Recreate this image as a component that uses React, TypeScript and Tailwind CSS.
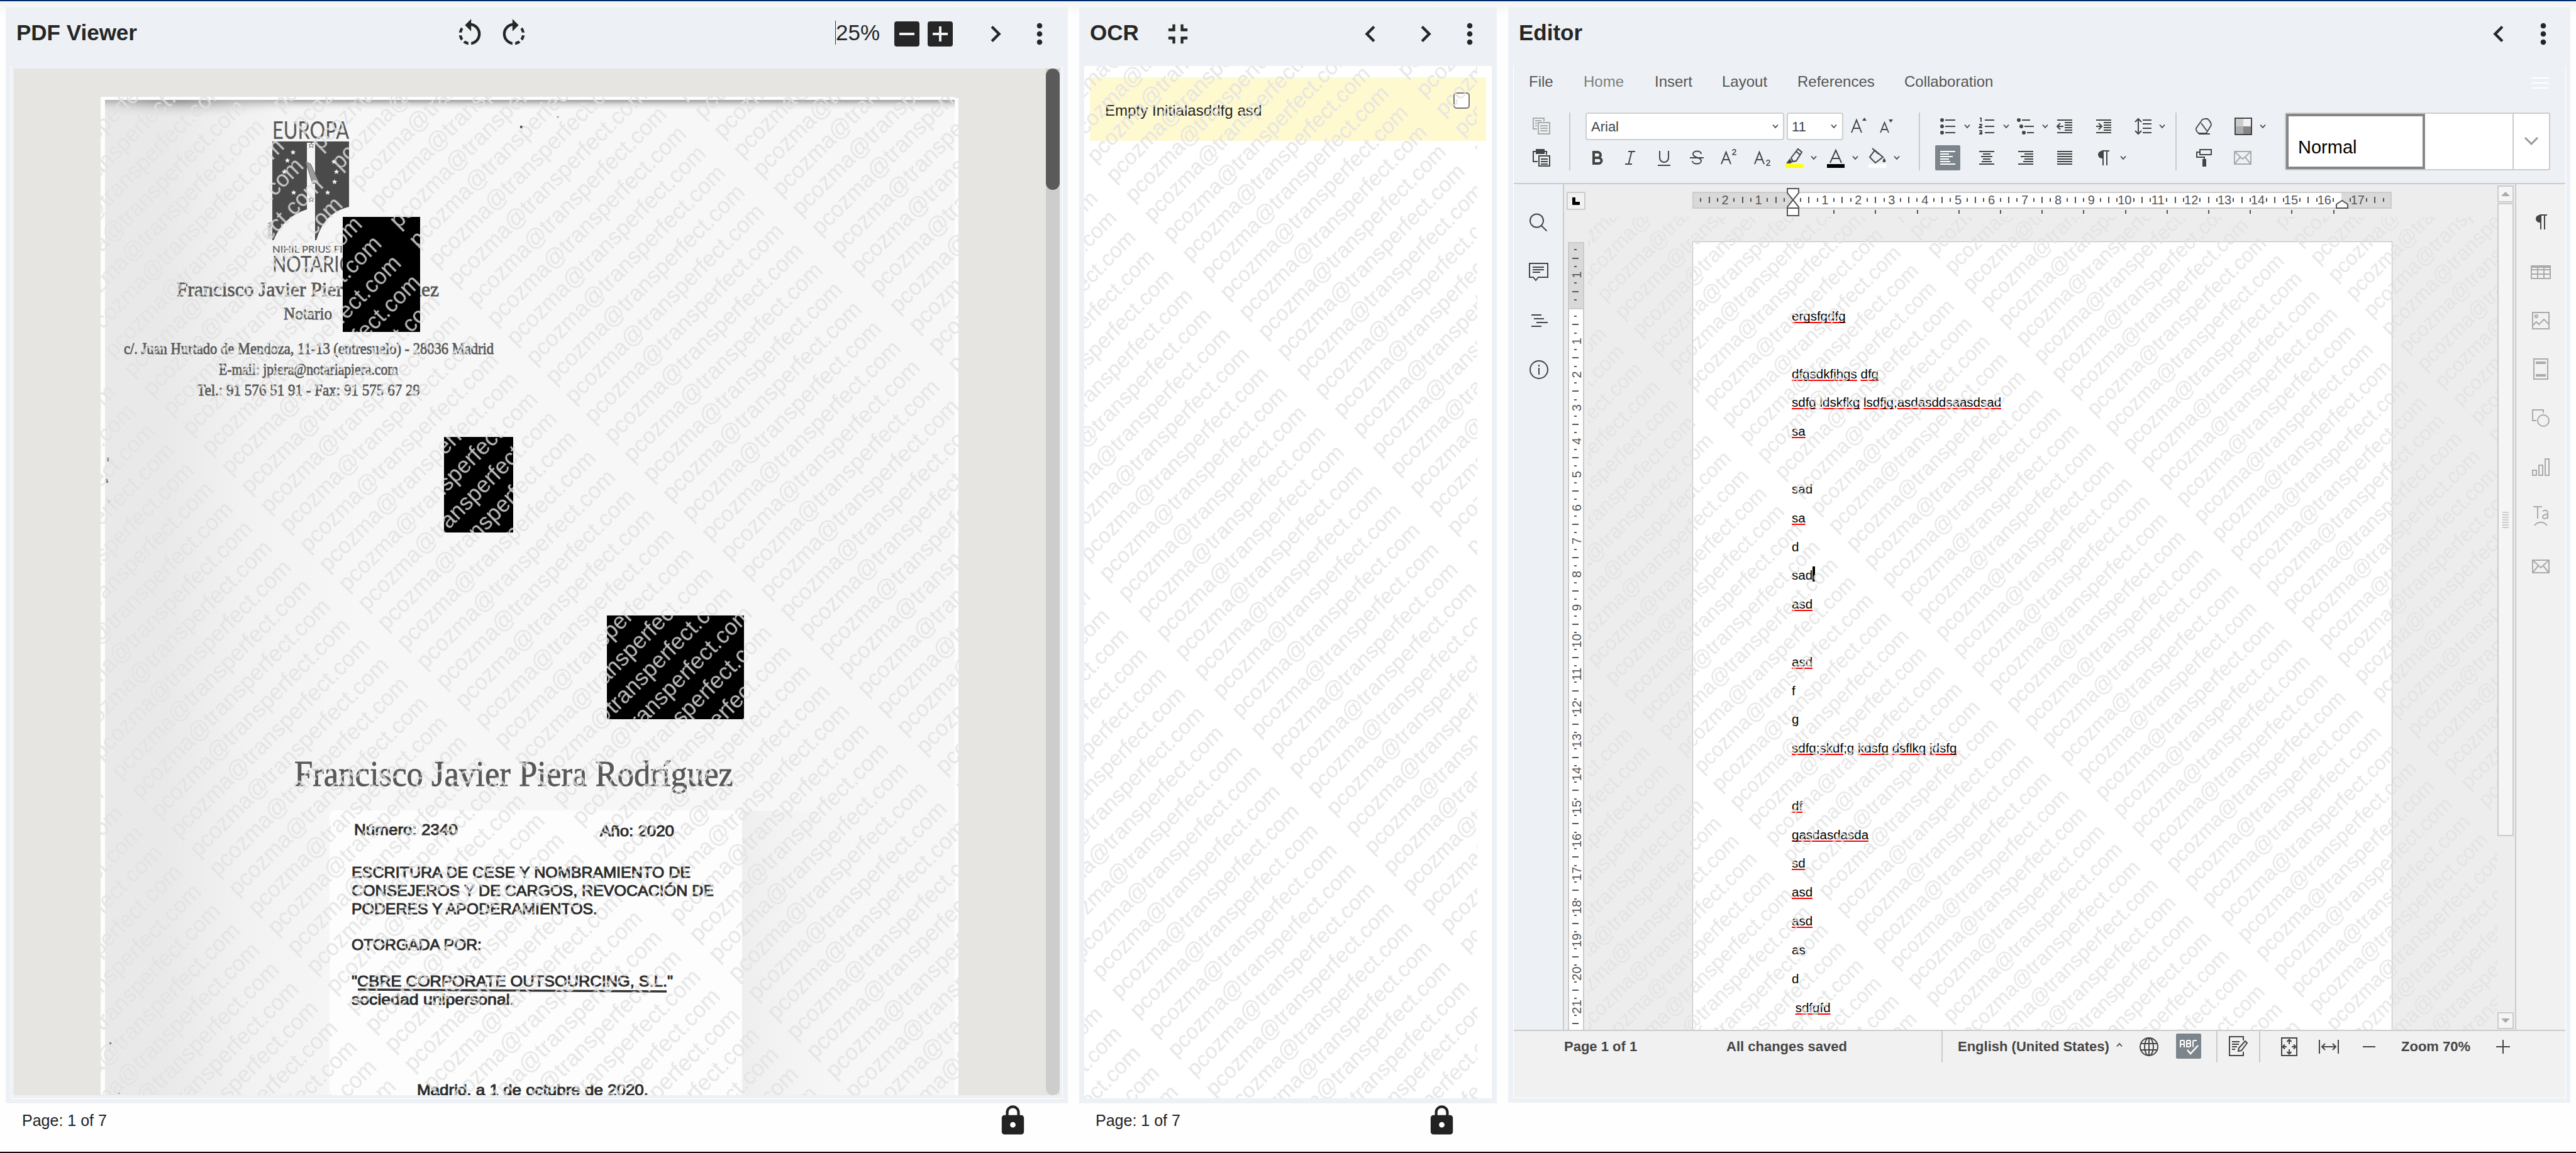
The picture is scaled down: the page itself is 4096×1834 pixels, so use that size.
import React from "react";
import {
  MdRotateLeft,
  MdRotateRight,
  MdChevronRight,
  MdChevronLeft,
  MdMoreVert,
  MdFullscreenExit,
  MdLock,
} from "react-icons/md";

const MARK = "pcozma@transperfect.com";

type MarkProps = {
  id: string;
  x: number;
  y: number;
  size: number;
  col: number;
  row: number;
  sy?: number;
};

/* Repeating diagonal e-mail watermark; (x, y) is the baseline start of one repeat. */
function Watermark({ id, x, y, size, col, row, sy = 1 }: MarkProps) {
  const base = row * 0.74;
  return (
    <svg className="pointer-events-none absolute inset-0 h-full w-full">
      <defs>
        <pattern
          id={id}
          x="0"
          y="0"
          width={col}
          height={row}
          patternUnits="userSpaceOnUse"
          patternTransform={`translate(${x} ${y}) scale(1 ${sy}) rotate(-45) translate(0 ${-base})`}
        >
          <text x="0" y={base} fontSize={size} fill="#e1e1e1" fillOpacity="0.84" fontFamily="Liberation Sans, Arial, sans-serif">
            {MARK}
          </text>
        </pattern>
      </defs>
      <rect width="100%" height="100%" fill={`url(#${id})`} />
    </svg>
  );
}

/* ------------------------------------------------------------------ PDF */

const STARS = [
  [466, 242], [457, 255], [452, 273], [467, 306], [531, 257],
  [535, 273], [532, 289], [521, 306],
];

type ScanLine = { t: string; x: number; y: number; w: number; s: number; f?: "serif" | "lato" };

const SCAN_TOP: ScanLine[] = [
  { t: "EUROPA", x: 433, y: 221, w: 122, s: 39, f: "lato" },
  { t: "NIHIL PRIUS FIDE", x: 433, y: 402, w: 134, s: 15, f: "lato" },
  { t: "NOTARIO", x: 433, y: 433, w: 130, s: 36, f: "lato" },
  { t: "Francisco Javier Piera Rodríguez", x: 281, y: 471, w: 417, s: 32 },
  { t: "Notario", x: 451, y: 508, w: 77, s: 27 },
  { t: "c/. Juan Hurtado de Mendoza, 11-13 (entresuelo) - 28036 Madrid", x: 197, y: 563, w: 588, s: 25 },
  { t: "E-mail: jpiera@notariapiera.com", x: 348, y: 596, w: 285, s: 25 },
  { t: "Tel.: 91 576 51 91 - Fax: 91 575 67 29", x: 313, y: 629, w: 355, s: 25 },
  { t: "Francisco Javier Piera Rodríguez", x: 468, y: 1250, w: 698, s: 58 },
];

const SCAN_CARD: ScanLine[] = [
  { t: "Número: 2340", x: 563, y: 1328, w: 165, s: 24 },
  { t: "Año: 2020", x: 954, y: 1330, w: 118, s: 24 },
  { t: "ESCRITURA DE CESE Y NOMBRAMIENTO DE", x: 559, y: 1396, w: 539, s: 24 },
  { t: "CONSEJEROS Y DE CARGOS, REVOCACIÓN DE", x: 559, y: 1425, w: 576, s: 24 },
  { t: "PODERES Y APODERAMIENTOS.", x: 559, y: 1454, w: 391, s: 24 },
  { t: "OTORGADA POR:", x: 559, y: 1511, w: 207, s: 24 },
  { t: "\"CBRE CORPORATE OUTSOURCING, S.L.\"", x: 559, y: 1569, w: 511, s: 24 },
  { t: "sociedad unipersonal.", x: 559, y: 1598, w: 259, s: 24 },
  { t: "Madrid, a 1 de octubre de 2020.", x: 663, y: 1742, w: 368, s: 24 },
];

function ScannedPage() {
  return (
    <svg className="absolute inset-0 h-full w-full" viewBox="160 154 1364 1588">
      <defs>
        <linearGradient id="pgLeft" x1="0" x2="1" y1="0" y2="0">
          <stop offset="0" stopColor="#e9e9e9" />
          <stop offset="0.07" stopColor="#e9e9e9" />
          <stop offset="0.17" stopColor="#f2f2f2" />
          <stop offset="0.3" stopColor="#f7f7f7" />
          <stop offset="1" stopColor="#f7f7f7" />
        </linearGradient>
        <linearGradient id="pgTop" x1="0" x2="0" y1="0" y2="1">
          <stop offset="0" stopColor="#9c9c9c" />
          <stop offset="0.35" stopColor="#cfcfcf" />
          <stop offset="1" stopColor="#f0f0f0" stopOpacity="0" />
        </linearGradient>
        <radialGradient id="pgCorner" cx="0.38" cy="0" r="0.75">
          <stop offset="0" stopColor="#8a8a8a" stopOpacity="0.8" />
          <stop offset="0.4" stopColor="#bdbdbd" stopOpacity="0.6" />
          <stop offset="1" stopColor="#e8e8e8" stopOpacity="0" />
        </radialGradient>
        <linearGradient id="pgSide" x1="0" x2="1" y1="0" y2="0">
          <stop offset="0" stopColor="#eeeeee" />
          <stop offset="1" stopColor="#f7f7f7" stopOpacity="0" />
        </linearGradient>
      </defs>
      <rect x="160" y="154" width="1364" height="1588" fill="#fdfdfd" />
      <rect x="167" y="159" width="1351" height="1583" fill="url(#pgLeft)" />
      <rect x="167" y="159" width="1351" height="16" fill="url(#pgTop)" />
      <rect x="167" y="159" width="300" height="40" fill="url(#pgCorner)" />
      <rect x="1180" y="1290" width="220" height="452" fill="url(#pgSide)" />
      <circle cx="829" cy="202" r="2.2" fill="#444" />
      <circle cx="887" cy="186" r="1.5" fill="#999" />
      <path d="M172 728v6M169 762l2 6M173 796v4M175 1658l1 3M189 1738v2" stroke="#777" strokeWidth="3" />
      {SCAN_TOP.map((l, i) => (
        <text
          key={i}
          x={l.x}
          y={l.y}
          fontSize={l.s}
          textLength={l.w}
          lengthAdjust="spacingAndGlyphs"
          fill="#585858"
          fontFamily={l.f === "lato" ? "Lato, sans-serif" : "Liberation Serif, serif"}
          stroke="#585858"
          strokeWidth={l.f === "lato" ? 0.2 : 0.8}
        >
          {l.t}
        </text>
      ))}
      <path d="M433 226H488V333Q450 345 435 382H433Z" fill="#4a4a4a" />
      <path d="M501 226H555V329Q515 338 503 382H501Z" fill="#4a4a4a" />
      <path d="M486 257l8 4 13 29-10 2z" fill="#9b9b9b" stroke="#666" strokeWidth="1" />
      <path d="M433 226H555" stroke="#4a4a4a" strokeWidth="2" />
      {STARS.map(([x, y], i) => (
        <path key={i} d={`M${x} ${y - 4}l1.2 2.8 3 .2-2.3 1.9.8 3-2.7-1.6-2.7 1.6.8-3-2.3-1.900 3-.2z`} fill="#f4f4f4" />
      ))}
      <path d="M495 227l1 3 3 0-2 2 1 3-3-2-3 2 1-3-2-2 3 0zM495 313l1 3 3 0-2 2 1 3-3-2-3 2 1-3-2-2 3 0z" fill="none" stroke="#777" strokeWidth="1" />
      <text transform="translate(432 380) rotate(-90)" fontSize="7" textLength="27" fill="#777" fontFamily="Lato, sans-serif">
        ESPAÑA
      </text>
      <rect x="524" y="1289" width="656" height="453" rx="6" fill="#fdfdfd" />
      {SCAN_CARD.map((l, i) => (
        <text
          key={i}
          x={l.x}
          y={l.y}
          fontSize={l.s}
          textLength={l.w}
          lengthAdjust="spacingAndGlyphs"
          fill="#2c2c2c"
          stroke="#2c2c2c"
          strokeWidth="1"
          fontFamily="Liberation Sans, Arial, sans-serif"
        >
          {l.t}
        </text>
      ))}
      <path d="M569 1574L1060 1577" stroke="#333" strokeWidth="3.5" />
      <rect x="545" y="345" width="123" height="183" fill="#000" />
      <rect x="706" y="695" width="110" height="152" fill="#000" />
      <rect x="965" y="979" width="218" height="165" fill="#000" />
    </svg>
  );
}

function Footer({ lock }: { lock: string }) {
  return (
    <div className="flex h-[77px] items-start text-[25px] text-[#222]">
      <span className="ml-[26px] mt-[12px] leading-[30px]">Page: 1 of 7</span>
      <MdLock className={lock} />
    </div>
  );
}

function PdfPanel() {
  return (
    <section className="w-[1689px]">
      <div className="h-[1744px] bg-[#edf1f5]">
        <header className="flex h-[94px] items-start text-[#262626]">
          <h1 className="ml-[17px] mt-[21px] w-[695px] text-[35px] leading-[40px] font-bold">PDF Viewer</h1>
          <MdRotateLeft className="mt-[17px] h-[52px] w-[52px]" />
          <MdRotateRight className="mt-[17px] ml-[18px] h-[52px] w-[52px]" />
          <div className="mt-[21px] ml-[485px] flex w-[94px] items-center text-[35px] leading-[40px]">
            <span className="h-[38px] w-px bg-[#333]" />
            <span>25%</span>
          </div>
          <button className="mt-[23px] flex h-[40px] w-[40px] items-center justify-center rounded-[4px] bg-[#262626]">
            <span className="h-[4px] w-[24px] bg-[#edf1f5]" />
          </button>
          <button className="relative mt-[23px] ml-[13px] flex h-[40px] w-[40px] items-center justify-center rounded-[4px] bg-[#262626]">
            <span className="h-[4px] w-[24px] bg-[#edf1f5]" />
            <span className="absolute h-[24px] w-[4px] bg-[#edf1f5]" />
          </button>
          <MdChevronRight className="mt-[17px] ml-[42px] h-[52px] w-[52px]" />
          <MdMoreVert className="mt-[17px] ml-[18px] h-[52px] w-[52px]" />
        </header>
        <div className="ml-[8px] h-[1643px] w-[1673px] border border-t-0 border-white px-[4px] pt-[4px]">
          <div className="flex h-[1633px] w-[1663px] bg-[#e6e5e1]">
            <div className="relative mt-[45px] ml-[138px] h-[1588px] w-[1364px] overflow-hidden">
              <ScannedPage />
              <Watermark id="wmPdf" x={175} y={571} size={36} col={466} row={43.84} />
            </div>
            <div className="ml-auto h-full w-[22px] rounded-b-full bg-[#cdcdcd]">
              <div className="h-[193px] w-[22px] rounded-full bg-[#5a5a5a]" />
            </div>
          </div>
        </div>
      </div>
      <Footer lock="mt-px ml-auto mr-[61px] h-[53px] w-[53px]" />
    </section>
  );
}

function OcrPanel() {
  return (
    <section className="ml-[18px] w-[664px]">
      <div className="h-[1744px] bg-[#edf1f5]">
        <header className="flex h-[94px] items-start text-[#262626]">
          <h1 className="ml-[17px] mt-[21px] w-[114px] text-[35px] leading-[40px] font-bold">OCR</h1>
          <MdFullscreenExit className="mt-[17px] h-[52px] w-[52px]" />
          <MdChevronLeft className="mt-[17px] ml-[254px] h-[52px] w-[52px]" />
          <MdChevronRight className="mt-[17px] ml-[36px] h-[52px] w-[52px]" />
          <MdMoreVert className="mt-[17px] ml-[18px] h-[52px] w-[52px]" />
        </header>
        <div className="relative ml-[8px] h-[1642px] w-[648px] bg-white pt-[18px] pl-[9px]">
          <div className="flex h-[101px] w-[630px] bg-[#fff9d0] text-[24px] text-[#222]">
            <span className="mt-[38px] ml-[24px] leading-[30px] tracking-[0.05px]">Empty Initialasddfg asd</span>
            <span className="mt-[24px] mr-[26px] ml-auto h-[26px] w-[26px] rounded-[5px] border-2 border-[#767676] bg-white" />
          </div>
          <div className="absolute top-0 left-0 h-[1642px] w-[625px] overflow-hidden">
            <Watermark id="wmOcr" x={18} y={155.5} size={34} col={442} row={42.6} sy={1.032} />
          </div>
        </div>
      </div>
      <Footer lock="mt-px ml-auto mr-[61px] h-[53px] w-[53px]" />
    </section>
  );
}

/* --------------------------------------------------------------- Editor */

function Ico({ className = "", children }: { className?: string; children: React.ReactNode }) {
  return (
    <svg viewBox="0 0 28 28" className={`h-[28px] w-[28px] shrink-0 ${className}`} fill="none" stroke="currentColor" strokeWidth="2">
      {children}
    </svg>
  );
}

function Caret({ className = "" }: { className?: string }) {
  return (
    <svg viewBox="0 0 10 8" className={`h-[8px] w-[10px] shrink-0 ${className}`} fill="none" stroke="#444" strokeWidth="1.8">
      <path d="M1 1.5L5 6 9 1.5" />
    </svg>
  );
}

function Envelope({ className = "" }: { className?: string }) {
  return (
    <Ico className={className}>
      <path d="M1 4h26v20H1zM1 4l13 12L27 4M1 24l9-11M27 24l-9-11" />
    </Ico>
  );
}

function Pilcrow({ className = "" }: { className?: string }) {
  return (
    <Ico className={className}>
      <path d="M23 3H12a6 6 0 0 0 0 12h2V3z" fill="currentColor" stroke="none" />
      <path d="M14 3v23M20 3v23M12 3h12" />
    </Ico>
  );
}

const MENU: [string, string][] = [
  ["File", "w-[87px]"],
  ["Home", "w-[113px]"],
  ["Insert", "w-[107px]"],
  ["Layout", "w-[120px]"],
  ["References", "w-[170px]"],
  ["Collaboration", "w-[180px]"],
];

function Ribbon() {
  return (
    <div className="h-[188px] text-[#444]">
      <nav className="relative flex h-[57px] items-start pt-[10px] pl-[24px] text-[24px] leading-[30px] text-[#555]">
        {MENU.map(([m, w]) => (
          <span key={m} className={`${w} ${m === "Home" ? "text-[#7d7d7d]" : ""}`}>
            {m}
          </span>
        ))}
        <span className="mt-[8px] mr-[26px] ml-auto flex h-[18px] w-[28px] flex-col justify-between">
          <i className="h-[2px] bg-white" />
          <i className="h-[2px] bg-white" />
          <i className="h-[2px] bg-white" />
        </span>
      </nav>
      <div className="mt-[17px] flex h-[92px]">
        <div className="ml-[30px] flex w-[28px] flex-col">
          <Ico className="mt-[7px] text-[#aaa]">
            <path d="M7 19H1V2h17v5M9 9h18v18H9zM12 14h12M12 18h12M12 22h12M4 6h10M4 10h3M4 14h3" />
          </Ico>
          <Ico className="mt-[23px]">
            <path d="M8 20H1V4h6M19 4h3v5M10 11h17v16H10zM13 16h11M13 20h11M13 24h11" />
            <path d="M6 1h12v6H6z" fill="currentColor" />
          </Ico>
        </div>
        <div className="ml-[30px] w-[2px] bg-[#cbcbcb]" />
        <div className="ml-[24px] w-[530px]">
          <div className="flex h-[44px] items-center">
            <div className="flex h-[44px] w-[316px] items-center justify-between rounded-[4px] border-2 border-[#cfcfcf] bg-white pr-[7px] pl-[7px] text-[22px]">
              Arial
              <Caret />
            </div>
            <div className="ml-[4px] flex h-[44px] w-[90px] items-center justify-between rounded-[4px] border-2 border-[#cfcfcf] bg-white pr-[8px] pl-[6px] text-[22px]">
              11
              <Caret />
            </div>
            <Ico className="ml-[10px]">
              <path d="M3 24L11 4l8 20M6 17h10" />
              <path d="M20 5l3.500-5 3.500 5z" fill="currentColor" stroke="none" />
            </Ico>
            <Ico className="ml-[18px]">
              <path d="M3 24L9.500 8l6.500 16M5.500 19h8" strokeWidth="1.800" />
              <path d="M16 3l3.500 5 3.500-5z" fill="currentColor" stroke="none" />
            </Ico>
          </div>
          <div className="mt-[8px] flex h-[40px] items-center">
            <Ico className="ml-[5px]">
              <path d="M8 5h6.500a4.500 4.500 0 0 1 0 9H8zM8 14h8a4.500 4.500 0 0 1 0 9H8z" strokeWidth="4" />
            </Ico>
            <Ico className="ml-[24px]">
              <path d="M11 4h11M6 24h11M16.500 4L11.500 24" />
            </Ico>
            <Ico className="ml-[26px]">
              <path d="M7 3v11a7 7 0 0 0 14 0V3M4 26h20" />
            </Ico>
            <Ico className="ml-[24px]">
              <path d="M21 8c0-6-13-6-13 0 0 7 13 4 13 11 0 6-14 6-14 0M3 14h22" />
            </Ico>
            <Ico className="ml-[23px]">
              <path d="M2 24L9.500 5 17 24M5 17h9" />
              <path d="M20 3c0-3 5-3 5 0 0 2-5 4-5 6h6" strokeWidth="1.600" />
            </Ico>
            <Ico className="ml-[25px]">
              <path d="M2 24L9.500 5 17 24M5 17h9" />
              <path d="M21 20c0-3 5-3 5 0 0 2-5 4-5 6h6" strokeWidth="1.600" />
            </Ico>
            <div className="ml-[23px] flex w-[28px] flex-col">
              <svg viewBox="0 0 28 26" className="h-[26px] w-[28px]" fill="none" stroke="currentColor" strokeWidth="2">
                <path d="M9 16L20 2l6 5-9 14-5 1zM17 6l6 5" />
                <path d="M1 25l6-8 4 6-3 2z" fill="currentColor" stroke="none" />
              </svg>
              <div className="h-[6px] w-[28px] bg-[#ffff00]" />
            </div>
            <Caret className="ml-[12px]" />
            <div className="ml-[16px] flex w-[28px] flex-col">
              <svg viewBox="0 0 28 26" className="h-[26px] w-[28px]" fill="none" stroke="currentColor" strokeWidth="2">
                <path d="M5 24L14 4l9 20M8 17h12" />
              </svg>
              <div className="h-[6px] w-[28px] bg-black" />
            </div>
            <Caret className="ml-[12px]" />
            <div className="ml-[16px] flex w-[28px] flex-col">
              <svg viewBox="0 0 28 26" className="h-[26px] w-[28px]" fill="none" stroke="currentColor" strokeWidth="2">
                <path d="M10 4l13 11-12 9L2 15zM6 1l10 9" />
                <path d="M25 16c4 6 2 7 0 7s-4-1 0-7z" fill="currentColor" stroke="none" />
              </svg>
              <div className="h-[6px] w-[28px] bg-white" />
            </div>
            <Caret className="ml-[12px]" />
          </div>
        </div>
        <div className="w-[2px] bg-[#cbcbcb]" />
        <div className="ml-[24px] w-[382px]">
          <div className="flex h-[44px] items-center">
            <Ico className="ml-[6px]">
              <path d="M10 4h16M10 14h16M10 24h16" />
              <g fill="currentColor" stroke="none"><circle cx="5" cy="4" r="3" /><circle cx="5" cy="14" r="3" /><circle cx="5" cy="24" r="3" /></g>
            </Ico>
            <Caret className="ml-[12px]" />
            <Ico className="ml-[12px]">
              <path d="M11 4h15M11 14h15M11 24h15" />
              <path d="M3 1h2v6M2 11h4c1 3-4 3-4 5h5M2 21h4v5H2M3 24h3" strokeWidth="1.800" />
            </Ico>
            <Caret className="ml-[12px]" />
            <Ico className="ml-[12px]">
              <path d="M8 4h13M12 14h15M16 24h11" />
              <g fill="currentColor" stroke="none"><circle cx="3" cy="4" r="3" /><circle cx="7" cy="14" r="3" /><circle cx="11" cy="24" r="3" /></g>
            </Ico>
            <Caret className="ml-[12px]" />
            <Ico className="ml-[12px]">
              <path d="M2 4h24M14 8h12M14 12h12M14 16h12M14 20h12M2 24h24M12 14H3M7 9l-5 5 5 5" />
            </Ico>
            <Ico className="ml-[34px]">
              <path d="M2 4h24M14 8h12M14 12h12M14 16h12M14 20h12M2 24h24M2 14h9M6 9l5 5-5 5" />
            </Ico>
            <Ico className="ml-[35px]">
              <path d="M13 4h14M13 10h14M13 17h14M13 24h14M6 2v24M1 7l5-5 5 5M1 21l5 5 5-5" />
            </Ico>
            <Caret className="ml-[11px]" />
          </div>
          <div className="mt-[8px] flex h-[40px] items-center">
            <div className="flex h-[40px] w-[40px] items-center justify-center rounded-[2px] bg-[#7d858c] text-white">
              <Ico><path d="M2 4h24M2 8h14M2 12h20M2 16h14M2 20h16M2 24h24" /></Ico>
            </div>
            <Ico className="ml-[28px]"><path d="M2 4h24M8 8h12M5 12h18M8 16h12M6 20h16M2 24h24" /></Ico>
            <Ico className="ml-[34px]"><path d="M2 4h24M12 8h14M6 12h20M12 16h14M10 20h16M2 24h24" /></Ico>
            <Ico className="ml-[34px]"><path d="M2 4h24M2 8h24M2 12h24M2 16h24M2 20h24M2 24h24" /></Ico>
            <Pilcrow className="ml-[33px]" />
            <Caret className="ml-[13px]" />
          </div>
        </div>
        <div className="w-[2px] bg-[#cbcbcb]" />
        <div className="ml-[29px] w-[143px]">
          <div className="flex h-[44px] items-center">
            <Ico>
              <path d="M16 2h4q6 5 6 10l-8 13H6q-5-4-4-8L12 3zM10 9l9 12M6 26h18" strokeWidth="1.800" />
            </Ico>
            <svg viewBox="0 0 28 28" className="ml-[35px] h-[28px] w-[28px]">
              <rect x="1" y="1" width="26" height="26" fill="#fff" />
              <path d="M2 2h12v12H2z" fill="#cbcbcb" />
              <path d="M2 14h12v12H2z" fill="#adadad" />
              <path d="M14 14h12v12H14z" fill="#868686" />
              <path d="M14 2h12v12H14z" fill="#f1f1f1" />
              <rect x="1" y="1" width="26" height="26" fill="none" stroke="#444" strokeWidth="2" />
            </svg>
            <Caret className="ml-[12px]" />
          </div>
          <div className="mt-[8px] flex h-[40px] items-center">
            <Ico className="ml-px">
              <path d="M7 1h18v8H7zM7 5H2v8h12v4" />
              <path d="M11 16h6v12h-6z" fill="currentColor" stroke="none" />
            </Ico>
            <Envelope className="ml-[33px] text-[#aaa]" />
          </div>
        </div>
        <div className="flex h-[92px] w-[422px] rounded-[3px] border-2 border-[#cbcbcb] bg-white">
          <div className="w-[221px] border-4 border-[#868686] pt-[31px] pl-[15px] text-[29px] leading-[36px] text-black">Normal</div>
          <div className="ml-auto flex w-[58px] items-center justify-center border-l-2 border-[#cbcbcb]">
            <svg viewBox="0 0 22 14" className="h-[14px] w-[22px]" fill="none" stroke="#999" strokeWidth="3">
              <path d="M1 1l10 10L21 1" />
            </svg>
          </div>
        </div>
      </div>
      <div className="mt-[20px] h-[2px] bg-[#cbcbcb]" />
    </div>
  );
}

const UNIT = 52.93;

function ticks(from: number, to: number) {
  const out: number[] = [];
  for (let q = from; q <= to; q++) out.push(q);
  return out;
}

function HRuler() {
  return (
    <svg className="absolute top-0 left-[194px] h-[52px] w-[1136px]" viewBox="2681 293 1136 52">
      <rect x="2692" y="306" width="1110" height="25" fill="#d9d9d9" stroke="#cbcbcb" strokeWidth="2" />
      <rect x="2851" y="307" width="872" height="23" fill="#fff" />
      {ticks(-11, 71).map((q) => {
        const x = 2850 + (q * UNIT) / 4;
        if (q === 0 || q === 66) return null;
        if (q % 4 === 0)
          return (
            <text key={q} x={x - 1} y="325" fontSize="20" textAnchor="middle" fill="#555">
              {Math.abs(q / 4)}
            </text>
          );
        const h = q % 2 === 0 ? 10 : 6;
        return <rect key={q} x={Math.round(x) - 1} y={318 - h / 2} width="2" height={h} fill="#555" />;
      })}
      {ticks(1, 13).map((k) => (
        <rect key={k} x={Math.round(2849 + k * 66.2)} y="334" width="2" height="6" fill="#555" />
      ))}
      <path d="M2842 300h18v7l-9 11 9 11v14h-18v-14l9-11-9-11zM2842 331h18" fill="#fff" stroke="#555" strokeWidth="2" />
      <path d="M3715 331v-6l9-6 9 6v6z" fill="#fff" stroke="#555" strokeWidth="2" />
    </svg>
  );
}

function VRuler() {
  return (
    <svg className="ml-[4px] h-[1293px] w-[34px]" viewBox="2491 345 34 1293">
      <rect x="2494" y="386" width="24" height="1260" fill="#fff" stroke="#cbcbcb" strokeWidth="2" />
      <rect x="2495" y="387" width="22" height="103" fill="#d9d9d9" />
      <path d="M2494 491h24" stroke="#cbcbcb" strokeWidth="2" />
      {ticks(-7, 86).map((q) => {
        const y = 490 + (q * UNIT) / 4;
        if (q === 0) return null;
        if (q % 4 === 0)
          return (
            <text key={q} transform={`translate(2514 ${y}) rotate(-90)`} fontSize="20" textAnchor="middle" fill="#555">
              {Math.abs(q / 4)}
            </text>
          );
        const w = q % 2 === 0 ? 10 : 4;
        return <rect key={q} x={2505 - w / 2} y={Math.round(y) - 1} width={w} height="2" fill="#555" />;
      })}
    </svg>
  );
}

/* A word starting with "~" carries the spell-checker underline. */
const DOC: string[][] = [
  ["~ergsfgdfg"], [],
  ["~dfgsdkfjhgs", " ", "~dfg"],
  ["~sdfg", " ", "~ldskfkg", " ", "~lsdfjg", ";", "~asdasddsaasdsad"],
  ["~sa"], [],
  ["sad"], ["~sa"], ["d"], ["sad", "|"], ["~asd"], [],
  ["~asd"], ["f"], ["g"],
  ["~sdfg", ";", "~skdf", ";g ", "~kdsfg", " ", "~dsflkg", " ", "~jdsfg"], [],
  ["~df"], ["~gasdasdasda"], ["~sd"], ["~asd"], ["~asd"], ["as"], ["d"],
  [" ", "~sdfgfd"],
];

function DocumentSheet() {
  return (
    <div className="absolute top-[39px] left-[166px] h-[1300px] w-[1113px] border border-[#bbb] bg-white pt-[95px] pl-[157px] text-[20.53px] leading-[45.82px] text-black">
      {DOC.map((line, i) => (
        <p key={i} className="flex h-[45.82px] whitespace-pre">
          {line.map((w, j) =>
            w === "|" ? (
              <i key={j} className="mt-[9px] h-[24px] w-[4px] bg-black" />
            ) : w[0] === "~" ? (
              <span key={j} className="underline decoration-[#f00] decoration-[2px] underline-offset-[2px] [text-decoration-skip-ink:none]">
                {w.slice(1)}
              </span>
            ) : (
              <span key={j}>{w}</span>
            )
          )}
        </p>
      ))}
    </div>
  );
}

function LeftRail() {
  return (
    <div className="flex w-[80px] flex-col border-r-2 border-[#cbcbcb] pl-[24px] text-[#444]">
      <svg viewBox="0 0 32 32" className="mt-[45px] h-[32px] w-[32px]" fill="none" stroke="currentColor" strokeWidth="2">
        <circle cx="12.500" cy="13" r="10.500" /><path d="M20 21l8.500 8.500" />
      </svg>
      <svg viewBox="0 0 32 32" className="mt-[47px] h-[32px] w-[32px]" fill="none" stroke="currentColor" strokeWidth="2">
        <path d="M1 2h29v22H15l-4 5-4-5H1zM6 8h18M6 12h18M6 16h12" />
      </svg>
      <svg viewBox="0 0 32 32" className="mt-[45px] h-[32px] w-[32px]" fill="none" stroke="currentColor" strokeWidth="2">
        <path d="M4 7h16M8 13h16M12 19h18M4 25h16" />
      </svg>
      <svg viewBox="0 0 32 32" className="mt-[47px] h-[32px] w-[32px]" fill="none" stroke="currentColor" strokeWidth="2">
        <circle cx="16" cy="15" r="14" /><path d="M16 12v11M16 7v3" />
      </svg>
    </div>
  );
}

function RightRail() {
  return (
    <div className="flex w-[80px] flex-col items-center border-l-2 border-[#cbcbcb] bg-[#f1f1f1] text-[#aaa]">
      <Pilcrow className="mt-[46px] text-[#444]" />
      <svg viewBox="0 0 32 24" className="mt-[54px] h-[24px] w-[32px]" fill="none" stroke="currentColor" strokeWidth="2">
        <path d="M1 2h30v20H1zM1 8h30M1 15h30M11 5v17M21 5v17" /><path d="M1 3h30" strokeWidth="4" />
      </svg>
      <Ico className="mt-[51px]">
        <path d="M1 1h26v26H1zM1 22l6-6 4 4 8-8 8 8" /><circle cx="7" cy="7" r="2" />
      </Ico>
      <svg viewBox="0 0 24 34" className="mt-[46px] h-[34px] w-[24px]" fill="none" stroke="currentColor" strokeWidth="2">
        <path d="M1 1h22v32H1z" /><path d="M4 7h16M4 27h16" strokeWidth="4" />
      </svg>
      <Ico className="mt-[47px]">
        <path d="M7 18H1V1h17v5" /><circle cx="18" cy="18" r="9" />
      </Ico>
      <Ico className="mt-[50px]">
        <path d="M1 19h6v8H1zM11 11h6v16h-6zM21 1h6v26h-6z" />
      </Ico>
      <svg viewBox="0 0 28 34" className="mt-[46px] h-[34px] w-[28px]" fill="none" stroke="currentColor" strokeWidth="2">
        <path d="M2 3h14M9 3v19M17 10c7-3 8 0 8 3v9M25 15c-10 0-9 7-5 7 3 0 5-2 5-4M4 33c5-7 15-7 20 0" />
      </svg>
      <Envelope className="mt-[50px]" />
    </div>
  );
}

function ScrollColumn() {
  return (
    <div className="flex w-[28px] flex-col bg-[#ededed] pt-[2px]">
      <div className="flex h-[27px] w-[26px] items-center justify-center border-2 border-[#cbcbcb] bg-[#f5f5f5]">
        <svg viewBox="0 0 14 7" className="h-[7px] w-[14px]"><path d="M0 7L7 0l7 7z" fill="#aaa" /></svg>
      </div>
      <div className="mt-px flex h-[1007px] w-[26px] flex-col items-center justify-center gap-[2px] border-2 border-[#cbcbcb] bg-[#f5f5f5]">
        {[0, 1, 2, 3, 4, 5, 6].map((i) => (
          <i key={i} className="h-[2px] w-[10px] bg-[#cbcbcb]" />
        ))}
      </div>
      <div className="mt-auto mb-px flex h-[27px] w-[26px] items-center justify-center border-2 border-[#cbcbcb] bg-[#f5f5f5]">
        <svg viewBox="0 0 14 7" className="h-[7px] w-[14px]"><path d="M0 0l7 7 7-7z" fill="#aaa" /></svg>
      </div>
    </div>
  );
}

function StatusBar() {
  return (
    <div className="flex h-[108px] items-start border-t-2 border-[#cbcbcb] bg-[#f1f1f1] text-[22px] leading-[50px] font-bold text-[#444]">
      <span className="ml-[80px] w-[258px]">Page 1 of 1</span>
      <span className="w-[342px]">All changes saved</span>
      <span className="h-[50px] w-[2px] bg-[#cbcbcb]" />
      <span className="ml-[24px] w-[252px] whitespace-nowrap">English (United States)</span>
      <svg viewBox="0 0 10 8" className="mt-[18px] h-[8px] w-[10px]" fill="none" stroke="#444" strokeWidth="1.800">
        <path d="M1 6.500L5 2l4 4.500" />
      </svg>
      <svg viewBox="0 0 30 30" className="mt-[10px] ml-[27px] h-[30px] w-[30px]" fill="none" stroke="currentColor" strokeWidth="2">
        <circle cx="15" cy="15" r="14" /><ellipse cx="15" cy="15" rx="7" ry="14" /><path d="M15 1v28M2 10h26M2 20h26" />
      </svg>
      <svg viewBox="0 0 40 40" className="mt-[4px] ml-[28px] h-[40px] w-[40px]">
        <rect width="40" height="40" rx="2" fill="#7d858c" />
        <path d="M7 22V12q0-1 1-1h4q1 0 1 1v10M7 17h6M17 11v10h4q2 0 2-3t-2-2h-4M17 11h4q2 0 2 2t-2 3M33 11h-4q-2 0-2 2v6q0 2 1 2" fill="none" stroke="#fff" strokeWidth="2" />
        <path d="M18 26l5 6L35 19" fill="none" stroke="#fff" strokeWidth="2.500" />
      </svg>
      <span className="ml-[24px] h-[50px] w-[2px] bg-[#cbcbcb]" />
      <svg viewBox="0 0 30 32" className="mt-[8px] ml-[18px] h-[32px] w-[30px]" fill="none" stroke="currentColor" strokeWidth="2">
        <path d="M23 7V1H1v30h22v-6M5 9h12M5 13h11M5 17h8M5 21h5M15 24l1-5L26 8l3 3-9 12z" />
      </svg>
      <span className="ml-[18px] h-[50px] w-[2px] bg-[#cbcbcb]" />
      <svg viewBox="0 0 26 30" className="mt-[10px] ml-[33px] h-[30px] w-[26px]" fill="none" stroke="currentColor" strokeWidth="2">
        <path d="M1 1h24v28H1zM13 4v7M13 19v7M3 15h6M17 15h6M9.500 7L13 3.500 16.500 7M9.500 23l3.500 3.500 3.500-3.500M6 11.500L2.500 15 6 18.500M20 11.500l3.500 3.500-3.500 3.500" />
      </svg>
      <svg viewBox="0 0 32 22" className="mt-[14px] ml-[34px] h-[22px] w-[32px]" fill="none" stroke="currentColor" strokeWidth="2">
        <path d="M1 0v22M31 0v22M5 11h22M10 6l-5 5 5 5M22 6l5 5-5 5" />
      </svg>
      <span className="mt-[24px] ml-[38px] h-[2px] w-[20px] bg-[#444]" />
      <span className="ml-[41px] w-[151px]">Zoom 70%</span>
      <svg viewBox="0 0 22 22" className="mt-[14px] h-[22px] w-[22px]" stroke="currentColor" strokeWidth="2">
        <path d="M11 0v22M0 11h22" />
      </svg>
    </div>
  );
}

function EditorPanel() {
  return (
    <section className="ml-[18px] w-[1689px]">
      <div className="h-[1743px] bg-[#edf1f5]">
        <header className="flex h-[94px] items-start text-[#262626]">
          <h1 className="ml-[17px] mt-[21px] text-[35px] leading-[40px] font-bold">Editor</h1>
          <MdChevronLeft className="mt-[17px] ml-auto h-[52px] w-[52px]" />
          <MdMoreVert className="mt-[17px] mr-[17px] ml-[19px] h-[52px] w-[52px]" />
        </header>
        <div className="ml-[8px] h-[1642px] w-[1674px] border-x border-b border-white">
          <Ribbon />
          <div className="flex h-[1345px]">
            <LeftRail />
            <div className="w-[1484px] bg-[#ededed]">
              <div className="relative flex h-[52px] items-start">
                <div className="mt-[12px] ml-[4px] flex h-[29px] w-[30px] items-center justify-center border-2 border-[#cbcbcb] bg-[#f1f1f1]">
                  <span className="h-[12px] w-[12px] border-b-[5px] border-l-[5px] border-black" />
                </div>
                <HRuler />
              </div>
              <div className="flex h-[1293px] overflow-hidden">
                <VRuler />
                <div className="relative h-[1293px] w-[1446px] overflow-hidden">
                  <DocumentSheet />
                  <Watermark id="wmDoc" x={197} y={305} size={32.4} col={421.9} row={40} />
                </div>
              </div>
            </div>
            <ScrollColumn />
            <RightRail />
          </div>
          <StatusBar />
        </div>
      </div>
    </section>
  );
}

export default function App() {
  return (
    <div className="h-[1834px] w-[4096px] overflow-hidden border-t-[2px] border-b-[2px] border-t-[#002b6b] border-b-[#1c0410] bg-[#fefefe] font-['Liberation_Sans',Arial,sans-serif]">
      <div className="flex h-[1830px] bg-gradient-to-b from-[#f4f4f4] to-[#fefefe] to-[24px] pt-[9px] pl-[9px]">
        <PdfPanel />
        <OcrPanel />
        <EditorPanel />
      </div>
    </div>
  );
}
